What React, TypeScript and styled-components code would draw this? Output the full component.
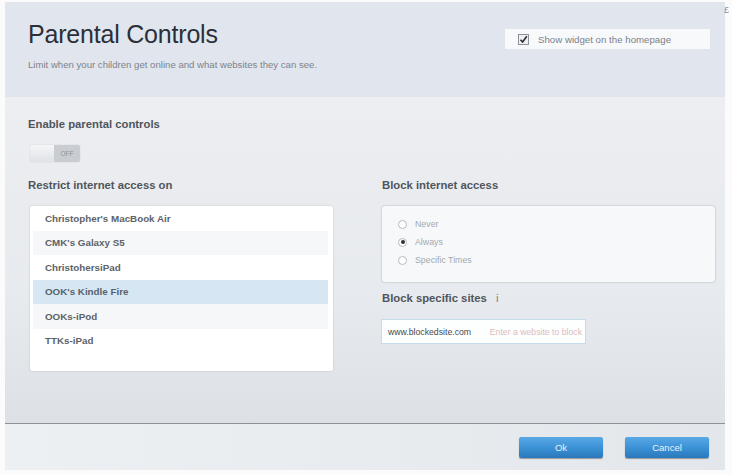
import styled, { createGlobalStyle } from 'styled-components'

const GlobalStyle = createGlobalStyle`
    html, body {
        margin: 0;
        padding: 0;
        background: #fbfbfc;
        font-family: "Liberation Sans", Arial, sans-serif;
    }
`

const Panel = styled.div`
    width: 720px;
    height: 468px;
    margin: 2px 0 0 5px;
    display: flex;
    flex-direction: column;
    background: #e8ebef;
    position: relative;
`
const CloseMark = styled.span`
    position: absolute;
    right: -4px;
    top: 3px;
    font-size: 9px;
    color: #8a8f96;
`
const Header = styled.div`
    height: 95px;
    padding: 0 15px 0 23px;
    background: #e1e6ee;
    display: flex;
    justify-content: space-between;
    align-items: flex-start;
`
const TitleBlock = styled.div`
    padding-top: 18px;
`
const Title = styled.h1`
    margin: 0;
    font-size: 25px;
    font-weight: 400;
    color: #2b3038;
    letter-spacing: -0.2px;
`
const Subtitle = styled.p`
    margin: 10px 0 0 0;
    font-size: 9.6px;
    color: #7d838b;
`
const WidgetBox = styled.label`
    margin-top: 27px;
    width: 192px;
    height: 20px;
    padding-left: 13px;
    background: #f8f9fb;
    display: flex;
    align-items: center;
    gap: 9px;
    font-size: 9.7px;
    color: #7a8088;
`
const CheckBox = styled.span`
    width: 9px;
    height: 9px;
    border: 1px solid #8d9299;
    background: #eef0f3;
    display: flex;
    align-items: center;
    justify-content: center;
`
const Body = styled.div`
    flex: 1;
    padding: 21px 18px 0 23px;
    background: linear-gradient(180deg, #eceef1 0%, #e7eaee 60%, #dde1e6 100%);
    border-bottom: 1px solid #8e9297;
`
const Label = styled.div`
    font-size: 11.3px;
    font-weight: 700;
    color: #50555c;
    margin-bottom: 15px;
`
const Toggle = styled.div`
    width: 50px;
    height: 17px;
    display: flex;
    border-radius: 2px;
    overflow: hidden;
    margin: 0 0 17px 2px;
    box-shadow: 0 0 1px rgba(0, 0, 0, 0.3);
`
const ToggleKnob = styled.span`
    width: 24px;
    background: linear-gradient(180deg, #f4f5f7, #dfe2e6);
`
const ToggleState = styled.span`
    flex: 1;
    background: #c9cdd2;
    color: #8e939a;
    font-size: 6.5px;
    display: flex;
    align-items: center;
    justify-content: center;
`
const Columns = styled.div`
    display: grid;
    grid-template-columns: 305px 333px;
    column-gap: 49px;
`
const DeviceList = styled.ul`
    list-style: none;
    margin: 0 0 0 2px;
    padding: 0 5px 0 3px;
    height: 165px;
    background: #ffffff;
    border-radius: 2px;
    box-shadow: 0 0 2px rgba(0, 0, 0, 0.2);
    box-sizing: border-box;
`
const DeviceRow = styled.li<{ $tone: 'plain' | 'alt' | 'selected' }>`
    height: 24.5px;
    padding-left: 12px;
    display: flex;
    align-items: center;
    font-size: 9.8px;
    font-weight: 700;
    color: ${(p) => (p.$tone === 'selected' ? '#56626e' : '#5d6269')};
    background: ${(p) =>
        p.$tone === 'selected' ? '#d6e7f3' : p.$tone === 'alt' ? '#f6f7f8' : '#ffffff'};
`
const RadioBox = styled.div`
    height: 76px;
    box-sizing: border-box;
    padding: 12px 0 0 16px;
    background: #f7f8fa;
    border-radius: 3px;
    box-shadow: 0 0 2px rgba(0, 0, 0, 0.3);
    display: flex;
    flex-direction: column;
    gap: 6px;
    margin-bottom: 10px;
`
const RadioRow = styled.div`
    display: flex;
    align-items: center;
    gap: 8px;
    font-size: 8.8px;
    color: #a3a8ae;
    height: 12px;
`
const RadioDot = styled.span<{ $on?: boolean }>`
    width: 9px;
    height: 9px;
    border-radius: 50%;
    box-sizing: border-box;
    border: 1px solid #b7bbc0;
    background: #ffffff;
    display: flex;
    align-items: center;
    justify-content: center;
    &::after {
        content: '';
        width: 4px;
        height: 4px;
        border-radius: 50%;
        background: ${(p) => (p.$on ? '#2d3035' : 'transparent')};
    }
`
const InfoMark = styled.span`
    font-weight: 400;
    margin-left: 9px;
    color: #7a8088;
`
const SiteInput = styled.div`
    width: 205px;
    height: 25px;
    box-sizing: border-box;
    margin-left: -1px;
    padding: 0 3px 0 6px;
    background: #fdfefe;
    border: 1px solid #c5dcec;
    display: flex;
    align-items: center;
    justify-content: space-between;
    font-size: 8.7px;
    white-space: nowrap;
    overflow: hidden;
`
const SiteValue = styled.span`
    color: #464b52;
`
const SitePlaceholder = styled.span`
    color: #dcbcc0;
`
const Footer = styled.div`
    height: 46px;
    padding-right: 16px;
    display: flex;
    align-items: center;
    justify-content: flex-end;
    gap: 22px;
    background: linear-gradient(90deg, #edf0f3, #e3e7eb);
`
const Button = styled.button`
    width: 84px;
    height: 21px;
    border: none;
    border-radius: 2px;
    background: linear-gradient(180deg, #5aa9e6 0%, #3a8fd3 55%, #2b78bb 100%);
    box-shadow: 0 1px 1px rgba(0, 0, 0, 0.35);
    color: #e8f2fb;
    font-family: inherit;
    font-size: 9.5px;
    padding: 0;
`

const devices: { name: string; tone: 'plain' | 'alt' | 'selected' }[] = [
    { name: "Christopher's MacBook Air", tone: 'plain' },
    { name: "CMK's Galaxy S5", tone: 'alt' },
    { name: 'ChristohersiPad', tone: 'plain' },
    { name: "OOK's Kindle Fire", tone: 'selected' },
    { name: 'OOKs-iPod', tone: 'alt' },
    { name: 'TTKs-iPad', tone: 'plain' },
]

const App = () => {
    return (
        <>
            <GlobalStyle />
            <Panel>
                <CloseMark>£</CloseMark>
                <Header>
                    <TitleBlock>
                        <Title>Parental Controls</Title>
                        <Subtitle>Limit when your children get online and what websites they can see.</Subtitle>
                    </TitleBlock>
                    <WidgetBox>
                        <CheckBox>
                            <svg width="9" height="9" viewBox="0 0 9 9">
                                <path d="M1.5 4.8 L3.6 7 L7.8 1.2" fill="none" stroke="#2a2d31" strokeWidth="1.6" />
                            </svg>
                        </CheckBox>
                        Show widget on the homepage
                    </WidgetBox>
                </Header>
                <Body>
                    <Label>Enable parental controls</Label>
                    <Toggle>
                        <ToggleKnob />
                        <ToggleState>OFF</ToggleState>
                    </Toggle>
                    <Columns>
                        <div>
                            <Label>Restrict internet access on</Label>
                            <DeviceList>
                                {devices.map((d) => (
                                    <DeviceRow key={d.name} $tone={d.tone}>{d.name}</DeviceRow>
                                ))}
                            </DeviceList>
                        </div>
                        <div>
                            <Label>Block internet access</Label>
                            <RadioBox>
                                <RadioRow><RadioDot />Never</RadioRow>
                                <RadioRow><RadioDot $on />Always</RadioRow>
                                <RadioRow><RadioDot />Specific Times</RadioRow>
                            </RadioBox>
                            <Label>Block specific sites<InfoMark>i</InfoMark></Label>
                            <SiteInput>
                                <SiteValue>www.blockedsite.com</SiteValue>
                                <SitePlaceholder>Enter a website to block</SitePlaceholder>
                            </SiteInput>
                        </div>
                    </Columns>
                </Body>
                <Footer>
                    <Button>Ok</Button>
                    <Button>Cancel</Button>
                </Footer>
            </Panel>
        </>
    )
}

export default App
